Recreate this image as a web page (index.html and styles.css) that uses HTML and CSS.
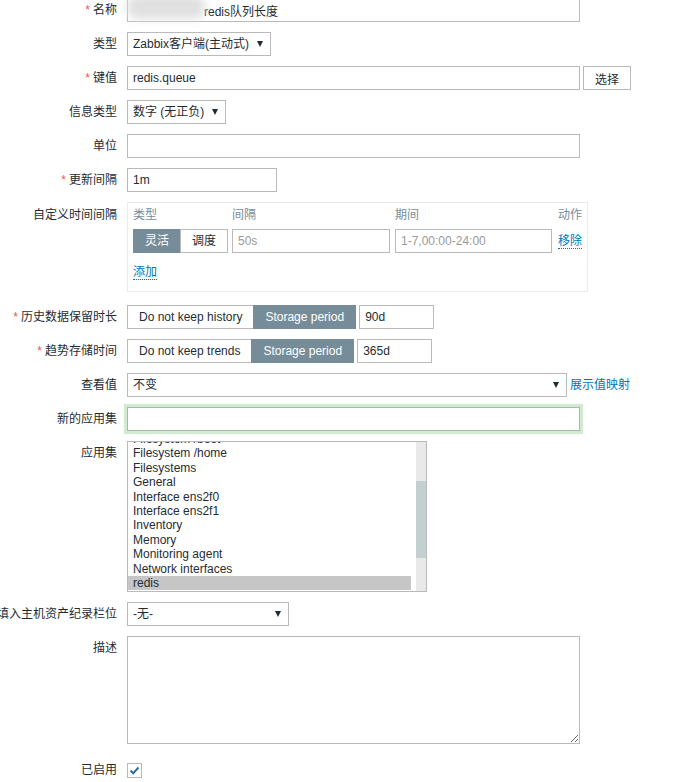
FILE: index.html
```html
<!DOCTYPE html>
<html lang="zh-CN">
<head>
  <meta charset="UTF-8">
  <meta name="viewport" content="width=device-width, initial-scale=1.0">
  <title>监控项 - redis队列长度</title>
  <link rel="stylesheet" href="styles.css">
</head>
<body>
  <form class="item-form">
    <div class="form-row">
      <label class="form-label required" for="name">名称</label>
      <div class="masked">
        <span class="mask"></span>
        <input type="text" id="name" class="w-wide name-input" value="redis队列长度">
      </div>
    </div>

    <div class="form-row">
      <label class="form-label" for="type">类型</label>
      <span class="select-wrap">
        <select id="type" class="w-type">
          <option selected>Zabbix客户端(主动式)</option>
        </select>
      </span>
    </div>

    <div class="form-row">
      <label class="form-label required" for="key">键值</label>
      <div class="controls">
        <input type="text" id="key" class="w-wide" value="redis.queue">
        <button type="button" class="btn">选择</button>
      </div>
    </div>

    <div class="form-row">
      <label class="form-label" for="valueType">信息类型</label>
      <span class="select-wrap">
        <select id="valueType" class="w-value-type">
          <option selected>数字 (无正负)</option>
        </select>
      </span>
    </div>

    <div class="form-row">
      <label class="form-label" for="units">单位</label>
      <input type="text" id="units" class="w-wide" value="">
    </div>

    <div class="form-row">
      <label class="form-label required" for="delay">更新间隔</label>
      <input type="text" id="delay" class="w-delay" value="1m">
    </div>

    <div class="form-row">
      <label class="form-label label-box">自定义时间间隔</label>
      <div class="interval-box">
        <div class="interval-head">
          <span class="col-type">类型</span>
          <span class="col-interval">间隔</span>
          <span class="col-period">期间</span>
          <span class="col-action">动作</span>
        </div>
        <div class="interval-row">
          <div class="col-type">
            <div class="segmented">
              <span class="on">灵活</span>
              <span>调度</span>
            </div>
          </div>
          <div class="col-interval">
            <input type="text" class="w-interval" placeholder="50s">
          </div>
          <div class="col-period">
            <input type="text" class="w-period" placeholder="1-7,00:00-24:00">
          </div>
          <div class="col-action">
            <a class="link dotted">移除</a>
          </div>
        </div>
        <div class="interval-add">
          <a class="link dotted">添加</a>
        </div>
      </div>
    </div>

    <div class="form-row">
      <label class="form-label required">历史数据保留时长</label>
      <div class="controls">
        <div class="segmented">
          <span>Do not keep history</span>
          <span class="on">Storage period</span>
        </div>
        <input type="text" class="w-period-short" value="90d">
      </div>
    </div>

    <div class="form-row">
      <label class="form-label required">趋势存储时间</label>
      <div class="controls">
        <div class="segmented">
          <span>Do not keep trends</span>
          <span class="on">Storage period</span>
        </div>
        <input type="text" class="w-period-short" value="365d">
      </div>
    </div>

    <div class="form-row">
      <label class="form-label" for="valuemap">查看值</label>
      <div class="controls">
        <span class="select-wrap">
          <select id="valuemap" class="w-valuemap">
            <option selected>不变</option>
          </select>
        </span>
        <a class="link plain">展示值映射</a>
      </div>
    </div>

    <div class="form-row">
      <label class="form-label" for="newApp">新的应用集</label>
      <input type="text" id="newApp" class="w-wide focused" value="">
    </div>

    <div class="form-row">
      <label class="form-label">应用集</label>
      <div class="listbox">
        <ul class="listbox-items">
          <li>Filesystem /boot</li>
          <li>Filesystem /home</li>
          <li>Filesystems</li>
          <li>General</li>
          <li>Interface ens2f0</li>
          <li>Interface ens2f1</li>
          <li>Inventory</li>
          <li>Memory</li>
          <li>Monitoring agent</li>
          <li>Network interfaces</li>
          <li class="selected">redis</li>
        </ul>
        <div class="scrollbar"><div class="scrollbar-thumb"></div></div>
      </div>
    </div>

    <div class="form-row">
      <label class="form-label" for="inventory">填入主机资产纪录栏位</label>
      <span class="select-wrap">
        <select id="inventory" class="w-inventory">
          <option selected>-无-</option>
        </select>
      </span>
    </div>

    <div class="form-row">
      <label class="form-label" for="description">描述</label>
      <textarea id="description" class="w-wide description"></textarea>
    </div>

    <div class="form-row row-enabled">
      <label class="form-label">已启用</label>
      <div class="check-cell">
        <span class="checkbox">
          <svg width="13" height="13" viewBox="0 0 13 13"><polyline points="2.5,6.5 5.2,9.2 10.5,3.5" fill="none" stroke="#2f6e9c" stroke-width="2"/></svg>
        </span>
      </div>
    </div>
  </form>
</body>
</html>
```

FILE: styles.css
```css
body {
  margin: 0;
  background: #fff;
  color: #1f2c33;
  font: 12px "Liberation Sans", "Noto Sans CJK SC", sans-serif;
}
.item-form {
  display: flex;
  flex-direction: column;
  gap: 10px;
  margin-top: -2px;
}
.form-row {
  display: flex;
  gap: 10px;
  align-items: flex-start;
}
.form-label {
  flex: 0 0 117px;
  min-width: 0;
  display: flex;
  justify-content: flex-end;
  white-space: nowrap;
  line-height: 24px;
}
.label-box {
  padding-top: 1px;
}
.required::before {
  content: "*";
  color: #e45959;
  margin-right: 3px;
}
.controls {
  display: flex;
  gap: 3px;
  align-items: flex-start;
}
input[type="text"],
select,
textarea,
.btn {
  font: inherit;
  color: inherit;
  box-sizing: border-box;
  height: 24px;
  margin: 0;
  padding: 0 5px;
  border: 1px solid #b9b9b9;
  border-radius: 0;
  background: #fff;
  outline: none;
}
input::placeholder {
  color: #9a9a9a;
}
.w-wide { width: 453px; }
.w-type { width: 144px; }
.w-value-type { width: 99px; }
.w-delay { width: 150px; }
.w-interval { width: 158px; }
.w-period { width: 157px; }
.w-period-short { width: 75px; }
.w-valuemap { width: 440px; }
.w-inventory { width: 162px; }

.masked {
  position: relative;
}
input[type="text"].name-input {
  padding-left: 76px;
}
.mask {
  position: absolute;
  left: 0;
  top: -3px;
  width: 78px;
  height: 24px;
  background: #e0e0e0;
  border-radius: 10px;
  filter: blur(5px);
  z-index: 1;
}

select {
  -webkit-appearance: none;
  appearance: none;
  padding-right: 20px;
}
.select-wrap {
  position: relative;
  display: inline-block;
  height: 24px;
}
.select-wrap::after {
  content: "";
  position: absolute;
  right: 8px;
  top: 9px;
  border-left: 3px solid transparent;
  border-right: 3px solid transparent;
  border-top: 6px solid #1f2c33;
  pointer-events: none;
}
.btn {
  padding: 0 11px;
  cursor: pointer;
}
.link {
  color: #0275b8;
  cursor: pointer;
}
.link.plain {
  line-height: 24px;
}
.link.dotted {
  border-bottom: 1px dotted #0275b8;
}

.interval-box {
  width: 461px;
  height: 90px;
  box-sizing: border-box;
  border: 1px solid #ebebeb;
  padding: 5px 5px 0;
  margin-bottom: 3px;
}
.interval-head,
.interval-row {
  display: flex;
}
.interval-head {
  color: #768d99;
  line-height: 14px;
  padding-bottom: 7px;
}
.col-type { width: 99px; }
.col-interval,
.col-period { width: 163px; }
.col-action { line-height: 24px; }
.interval-head .col-action { line-height: 14px; }
.interval-add {
  margin-top: 12px;
  line-height: 14px;
}

.segmented {
  display: flex;
}
.segmented span {
  height: 24px;
  box-sizing: border-box;
  line-height: 22px;
  padding: 0 11px;
  border: 1px solid #b9b9b9;
  background: #fff;
  white-space: nowrap;
}
.segmented span + span {
  margin-left: -1px;
}
.segmented .on {
  background: #768d99;
  border-color: #768d99;
  color: #fff;
}

input[type="text"].focused {
  border-color: #a9b9a9;
  box-shadow: 0 0 1px 3px #d2ead2;
}

.listbox {
  width: 300px;
  height: 151px;
  box-sizing: border-box;
  border: 1px solid #b9b9b9;
  display: flex;
  overflow: hidden;
}
.listbox-items {
  flex: 1;
  list-style: none;
  margin: -10px 0 0;
  padding: 0 5px 0 0;
}
.listbox-items li {
  height: 14.4px;
  line-height: 14.4px;
  padding-left: 5px;
  white-space: nowrap;
}
.listbox-items .selected {
  background: #c6c6c6;
}
.scrollbar {
  width: 10px;
  background: #e9e9e9;
}
.scrollbar-thumb {
  margin-top: 39px;
  height: 77px;
  background: #c3cfd1;
}

textarea.description {
  height: 108px;
  padding: 5px;
  resize: both;
}
.row-enabled {
  margin-top: 4px;
}
.check-cell {
  height: 24px;
  display: flex;
  align-items: center;
}
.checkbox {
  width: 15px;
  height: 15px;
  box-sizing: border-box;
  border: 1px solid #b9b9b9;
  background: #fff;
  display: flex;
  align-items: center;
  justify-content: center;
}
```
